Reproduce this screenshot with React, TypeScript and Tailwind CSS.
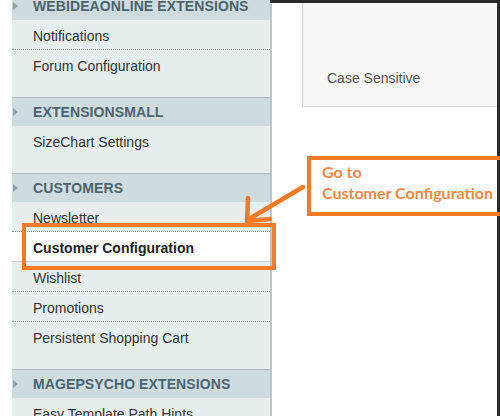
import React from 'react';

type Item = { label: string; active?: boolean; last?: boolean };
type Group = { title: string; items: Item[] };

const groups: Group[] = [
  {
    title: 'WEBIDEAONLINE EXTENSIONS',
    items: [{ label: 'Notifications' }, { label: 'Forum Configuration', last: true }],
  },
  { title: 'EXTENSIONSMALL', items: [{ label: 'SizeChart Settings', last: true }] },
  {
    title: 'CUSTOMERS',
    items: [
      { label: 'Newsletter' },
      { label: 'Customer Configuration', active: true },
      { label: 'Wishlist' },
      { label: 'Promotions' },
      { label: 'Persistent Shopping Cart', last: true },
    ],
  },
  { title: 'MAGEPSYCHO EXTENSIONS', items: [{ label: 'Easy Template Path Hints' }] },
];

function SectionHeader({ title }: { title: string }) {
  return (
    <div className="relative h-[28px] flex items-center bg-[#cfdcdf] pl-[21px]">
      <span className="absolute left-[1px] top-1/2 -translate-y-1/2 w-0 h-0 border-y-[4px] border-y-transparent border-l-[5px] border-l-[#8d9ea5]" />
      <span className="text-[14px] font-bold tracking-[0.1px] text-[#4c6470]">{title}</span>
    </div>
  );
}

function NavItem({ label, active, last }: Item) {
  return (
    <div
      className={
        'pl-[21px] pt-[6px] text-[14px] ' +
        (last
          ? 'h-[48px] border-b border-[#aebcc0] '
          : active
            ? 'h-[30px] border-b border-[#c6d0d2] '
            : 'h-[30px] border-b border-dotted border-[#8c9597] ') +
        (active ? 'bg-white font-bold text-[#222]' : 'text-[#333]')
      }
    >
      {label}
    </div>
  );
}

export default function App() {
  return (
    <div
      className="relative w-[500px] h-[416px] overflow-hidden bg-white"
      style={{ fontFamily: '"Liberation Sans", Arial, sans-serif' }}
    >
      <div className="flex h-full">
        <div className="w-[12px] shrink-0" />
        {/* sidebar */}
        <div className="w-[260px] shrink-0 -mt-[8px] bg-[#e7eeef] border-r-2 border-[#bcc7ca]">
          {groups.map((g) => (
            <div key={g.title}>
              <SectionHeader title={g.title} />
              {g.items.map((it) => (
                <NavItem key={it.label} {...it} />
              ))}
            </div>
          ))}
        </div>
        {/* content */}
        <div className="flex-1 pl-[30px] pr-[3px]">
          <div className="h-[107px] bg-[#f8f8f8] border-l border-b border-[#d4d4d4] flex items-end pb-[17px] pl-[24px]">
            <span className="text-[14px] text-[#555]">Case Sensitive</span>
          </div>
        </div>
      </div>

      {/* window frame */}
      <div className="absolute top-0 left-[270px] right-0 h-[3px] bg-[#2a2a2a]" />
      <div className="absolute top-0 right-0 bottom-0 w-[3px] bg-[#2a2a2a]" />

      {/* annotation: highlight box */}
      <div className="absolute left-[22px] top-[223px] w-[254px] h-[47px] border-[4px] border-[#f47a24]" />

      {/* annotation: arrow */}
      <svg className="absolute left-0 top-0" width="500" height="416" viewBox="0 0 500 416">
        <g stroke="#f47a24" strokeWidth="4.5" strokeLinecap="round" fill="none">
          <line x1="303" y1="187" x2="249" y2="219" />
          <polyline points="248,198 247,221 270,219" strokeLinejoin="miter" />
        </g>
      </svg>

      {/* annotation: callout */}
      <div className="absolute left-[307px] top-[156px] w-[200px] h-[60px] border-[4px] border-[#f47a24] pl-[11px] pt-[1px] leading-[21px]">
        <div className="text-[16px] font-bold text-[#ef8a48]" style={{ fontFamily: 'Lato, "Open Sans", sans-serif' }}>
          Go to
        </div>
        <div className="text-[16px] font-bold text-[#ef8a48] whitespace-nowrap" style={{ fontFamily: 'Lato, "Open Sans", sans-serif' }}>
          Customer Configuration
        </div>
      </div>
    </div>
  );
}
